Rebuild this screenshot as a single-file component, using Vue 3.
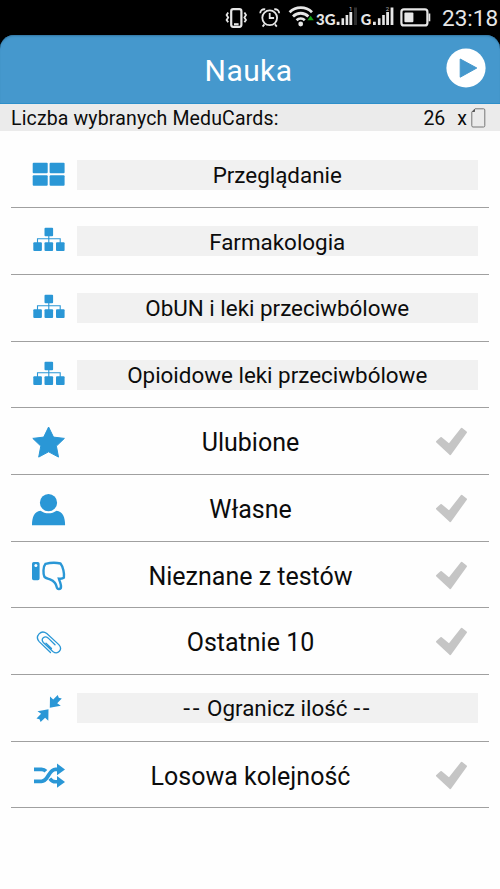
<template>
  <div class="screen">
    <div class="status-bar">
      <svg class="status-icons" width="210" height="35" viewBox="222 0 210 35">
        <!-- vibrate -->
        <rect x="231.2" y="9.2" width="10.2" height="17.6" rx="2" class="line" stroke-width="2.2" />
        <path d="M234 24.3h4.6" class="line" stroke-width="2.2" />
        <path d="M228.2 12.5l-1.6 2.4 1.6 2.5-1.6 2.5 1.6 2.4M244.4 12.5l1.6 2.4-1.6 2.5 1.6 2.5-1.6 2.4" class="line" />
        <!-- alarm -->
        <circle cx="269.7" cy="17.8" r="7.4" class="line" />
        <path d="M269.7 13v5h4.4M260.2 13.2a4 4 0 0 1 5-3.8M279.2 13.2a4 4 0 0 0-5-3.8M264.4 24.4l-1.8 2.2M275 24.4l1.8 2.2" class="line" />
        <!-- wifi -->
        <path d="M289.6 12.2a16 16 0 0 1 22.4 0M293 16.4a11 11 0 0 1 15.4 0M296.6 20.3a6 6 0 0 1 8.2 0" class="line" stroke-width="2.8" />
        <circle cx="300.7" cy="24" r="2.4" fill="#e6e6e6" />
        <path d="M307.4 20.2l3.2-4.4 3.2 4.4z" fill="#14a014" />
        <!-- signal -->
        <text x="316" y="25" class="net" textLength="19.5" lengthAdjust="spacingAndGlyphs">3G</text>
        <path d="M336.7 21.7h2.8V25h-2.8zM341.5 18.3h2.6V25h-2.6zM345.6 15h2.6v10h-2.6zM349.4 12h2.8v13h-2.8z" fill="#e6e6e6" />
        <rect x="354" y="7.5" width="3" height="17.5" fill="#2e2e2e" />
        <text x="349" y="11" class="sim">1</text>
        <text x="360.8" y="25" class="net">G</text>
        <path d="M373 21.7h2.8V25H373zM377.9 18.3h2.6V25h-2.6zM382.2 15h2.6v10h-2.6zM386.2 12h2.8v13h-2.8zM390.6 7.5h2.8V25h-2.8z" fill="#e6e6e6" />
        <text x="385.8" y="11" class="sim">2</text>
        <!-- battery -->
        <rect x="401.4" y="9.4" width="26" height="16" rx="2.5" class="line" stroke-width="2.2" />
        <rect x="404.4" y="12.6" width="9" height="9.6" rx="1" fill="#e6e6e6" />
        <path d="M429.4 13.5v7.8" class="line" />
      </svg>
      <span class="clock">23:18</span>
    </div>

    <header class="header">
      <h1 class="title">Nauka</h1>
      <button class="play" aria-label="Start">
        <svg width="40" height="40" viewBox="0 0 40 40">
          <circle cx="20" cy="20" r="19.6" fill="#fff" />
          <path d="M14.2 11l16.6 9-16.600 9.200z" fill="#4598cd" stroke="#4598cd" stroke-linejoin="round" />
        </svg>
      </button>
    </header>

    <div class="counter">
      <span class="counter-label">Liczba wybranych MeduCards:</span>
      <span class="counter-value">{{ count }}</span>
      <span class="counter-x">x</span>
      <svg class="card" width="15" height="20" viewBox="0 0 15 20">
        <path d="M4 .8h8.6a1.2 1.2 0 0 1 1.2 1.2v15.8a1.2 1.2 0 0 1-1.2 1.2H2a1.2 1.2 0 0 1-1.2-1.2V4z" fill="none" stroke="#777" />
        <path d="M.8 4L4 .8V3.4L3.4 4z" fill="#555" />
      </svg>
    </div>

    <main class="list">
      <div
        v-for="item in items"
        :key="item.label"
        :class="['row', item.select ? 'row-select' : 'row-check']"
        @click="toggle(item)"
      >
        <svg class="icon" width="36" height="36" viewBox="0 0 36 36">
          <g v-if="item.icon === 'grid'">
            <rect x="1.7" y="5.7" width="15" height="10.6" rx="1" />
            <rect x="18.6" y="5.7" width="15" height="10.6" rx="1" />
            <rect x="1.7" y="18.2" width="15" height="10.6" rx="1" />
            <rect x="18.6" y="18.2" width="15" height="10.6" rx="1" />
          </g>
          <g v-else-if="item.icon === 'tree'">
            <rect x="13.5" y="4.7" width="8.6" height="8.6" rx="1" />
            <rect x="2.3" y="19.3" width="8.6" height="8.6" rx="1" />
            <rect x="13.5" y="19.3" width="8.6" height="8.6" rx="1" />
            <rect x="25" y="19.3" width="8.6" height="8.6" rx="1" />
            <path d="M17.8 13v7M6.5 20v-4.3h22.7V20" class="stroke" stroke-width="1.1" />
          </g>
          <path
            v-else-if="item.icon === 'star'"
            d="M17.6 3l4.9 10.1 10.9 1.3-8 7.7 2.1 11-9.9-5.300-9.900 5.300 2.100-11-8-7.700 10.900-1.300z"
            stroke="#2a97d6"
            stroke-linejoin="round"
          />
          <g v-else-if="item.icon === 'person'">
            <path d="M1 34.200c0-8 2.200-13.700 8.500-14.500 4.500 3.400 11.600 3.400 16 0 6.300.8 8.600 6.500 8.600 14.500z" />
            <circle cx="17.500" cy="11.700" r="8.600" />
          </g>
          <g v-else-if="item.icon === 'thumb'">
            <path d="M2.700 4h4.200a1.700 1.700 0 0 1 1.700 1.700v14.800a1.700 1.700 0 0 1-1.700 1.700H2.700A1.700 1.700 0 0 1 1 20.500V5.700A1.700 1.700 0 0 1 2.700 4z" />
            <circle cx="4.900" cy="7.600" r="1.500" class="hole" />
            <path
              d="M14.500 5.800c4-1 10.500-1.400 15-.3 2.600 3.300 4 9.800 3.400 14.200-1.200 1.200-3.200 1.200-5 1 .8 3.200 3 6.300 1.900 9.400-1.100 1.300-3.100 1.200-3.900-.4-.7-5.200-3.500-6.900-6.900-8.300-2.500-.8-4.500-1-5.600-2.600-1.300-3-1.500-10 1.100-13z"
              class="stroke"
              stroke-width="2.400"
            />
          </g>
          <path
            v-else-if="item.icon === 'clip'"
            d="M19.500 28.500L8.200 17.600C3.500 12.300 10 5 15.800 9.600l12 11c4.400 4.800-.9 10.700-6 6.800L12.300 18.500c-3-3.600 1.400-7.400 4.700-4.600l7 6.800M20.500 24.500l-5.500-5.400"
            class="stroke"
            stroke-width="1.300"
            stroke-linecap="round"
          />
          <g v-else-if="item.icon === 'compress'">
            <path d="M19 6.500l3.200 3 4.500-4.600 1.100 2.800 3 .9-4.600 4.600 3.600 2.600-11 1.900z" />
            <path d="M17.300 30.800l-3.200-3-4.500 4.100-1.100-2.600-3-.9 4.600-4.600-3.600-2.600 11-1.900z" />
          </g>
          <g v-else>
            <path d="M3 11.300h7.500c2 0 3.400.8 4.400 2" class="stroke" stroke-width="3.800" />
            <path d="M3 23.300h7.500c3.600 0 5.200-3 7-6 1.900-3.300 3.600-6 7-6h3" class="stroke" stroke-width="3.800" />
            <path d="M18.800 20.600c1.600 2 3 3.200 5.700 3.200h3" class="stroke" stroke-width="3.600" />
            <path d="M26 5.500l8 6-8 5.800zM26 18l8 6-8 5.800z" />
          </g>
        </svg>

        <span v-if="item.dashed" class="label"><i class="dash">--</i> {{ item.label }} <i class="dash">--</i></span>
        <span v-else class="label">{{ item.label }}</span>

        <svg v-if="!item.select" :class="['check', { active: item.checked }]" width="36" height="36" viewBox="0 0 36 36">
          <path d="M3 17.800l4.100-3.700 8.100 6.600L27.600 4.800l4.400 3.400-15.800 21.900z" stroke-width="2" stroke-linejoin="round" />
        </svg>
      </div>
    </main>
  </div>
</template>

<script setup>
import { ref } from 'vue'

const count = ref(26)

const items = ref([
  { label: 'Przeglądanie', icon: 'grid', select: true },
  { label: 'Farmakologia', icon: 'tree', select: true },
  { label: 'ObUN i leki przeciwbólowe', icon: 'tree', select: true },
  { label: 'Opioidowe leki przeciwbólowe', icon: 'tree', select: true },
  { label: 'Ulubione', icon: 'star', checked: false },
  { label: 'Własne', icon: 'person', checked: false },
  { label: 'Nieznane z testów', icon: 'thumb', checked: false },
  { label: 'Ostatnie 10', icon: 'clip', checked: false },
  { label: 'Ogranicz ilość', icon: 'compress', select: true, dashed: true },
  { label: 'Losowa kolejność', icon: 'shuffle', checked: false }
])

const toggle = (item) => {
  if (!item.select) {
    item.checked = !item.checked
  }
}
</script>

<style>
body {
  background-color: #fff;
}
</style>

<style scoped>
.screen {
  height: 889px;
  overflow: hidden;
  background: linear-gradient(#000 60px, #fefefe 60px);
  font-family: Roboto, "Noto Sans", sans-serif;
  color: #0c0c0c;
}

.status-bar {
  display: flex;
  justify-content: flex-end;
  height: 35px;
  padding-right: 3px;
  background-color: #000;
}

.status-icons {
  margin-right: 10px;
  stroke-width: 1.8;
}

.line {
  fill: none;
  stroke: #e6e6e6;
}

.net {
  font-family: Lato, sans-serif;
  font-size: 14.5px;
  font-weight: 900;
  fill: #e6e6e6;
}

.sim {
  font-size: 6px;
  fill: #bbb;
}

.clock {
  width: 55px;
  font-size: 22.5px;
  line-height: 36px;
  color: #e6e6e6;
  white-space: nowrap;
}

.header {
  display: grid;
  grid-template-columns: 54px 1fr 54px;
  align-items: center;
  height: 69px;
  border-radius: 14px 14px 0 0;
  background-color: #4598cd;
  box-shadow: inset 0 2px 2px -1px #32749f, inset 0 -1px 0 #2d8fca;
}

.title {
  grid-column: 2;
  margin: 0;
  padding: 2px 3px 0 0;
  font-size: 30px;
  font-weight: 400;
  line-height: 36px;
  letter-spacing: 0.4px;
  text-align: center;
  color: #fff;
}

.play {
  width: 40px;
  height: 40px;
  margin: -3px 0 0;
  padding: 0;
  border: 0;
  background: none;
  cursor: pointer;
}

.play svg {
  display: block;
}

.counter {
  display: flex;
  align-items: center;
  height: 27px;
  padding: 0 14px 0 11px;
  background-color: #ebebeb;
  font-size: 19.5px;
  line-height: 25px;
}

.counter span {
  padding-top: 2px;
}

.counter-label {
  flex: 1;
  letter-spacing: 0.15px;
  white-space: nowrap;
}

.counter-x {
  margin: 0 4px 0 12px;
}

.list {
  padding: 10.8px 11px 0;
}

.row {
  display: grid;
  align-items: center;
  box-sizing: border-box;
  height: 66.67px;
  padding-left: 20px;
  border-bottom: 1px solid #a0a0a0;
}

.row-select {
  grid-template-columns: 36px 1fr;
  column-gap: 9.5px;
  padding-right: 11px;
}

.row-check {
  grid-template-columns: 36px 1fr 36px;
  padding-top: 2px;
  padding-right: 19px;
  cursor: pointer;
}

.icon {
  fill: #2a97d6;
}

.stroke {
  fill: none;
  stroke: #2a97d6;
}

.hole {
  fill: #fff;
}

.label {
  padding-top: 2px;
  font-size: 25px;
  line-height: 30px;
  text-align: center;
  white-space: nowrap;
}

.row-select .label {
  box-sizing: border-box;
  height: 30px;
  padding-top: 0.5px;
  background-color: #f1f1f1;
  font-size: 22.4px;
}

.dash {
  font-family: "Open Sans", sans-serif;
  font-size: 24px;
  font-style: normal;
  line-height: 1;
  letter-spacing: 1.6px;
}

.check path {
  fill: #c5c5c5;
  stroke: #c5c5c5;
}

.check.active path {
  fill: #2a97d6;
  stroke: #2a97d6;
}
</style>
